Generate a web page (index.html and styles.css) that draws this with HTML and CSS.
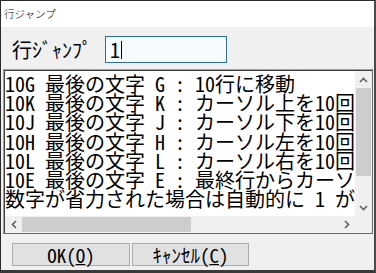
FILE: index.html
```html
<!DOCTYPE html>
<html lang="ja">
<head>
    <meta charset="UTF-8">
    <title>行ジャンプ</title>
    <link rel="stylesheet" href="styles.css">
</head>
<body>
    <div class="dialog">
        <div class="titlebar">行ジャンプ</div>

        <div class="content">
            <!-- jump target -->
            <div class="jump-row">
                <span class="jump-label">行ｼﾞｬﾝﾌﾟ</span>
                <div class="jump-input"><span>1</span><span class="caret"></span></div>
            </div>

            <!-- help list -->
            <div class="listbox">
                <div class="list-text">
                    <div class="line">10G 最後の文字 G : 10行に移動</div>
                    <div class="line">10K 最後の文字 K : カーソル上を10回移動</div>
                    <div class="line">10J 最後の文字 J : カーソル下を10回移動</div>
                    <div class="line">10H 最後の文字 H : カーソル左を10回移動</div>
                    <div class="line">10L 最後の文字 L : カーソル右を10回移動</div>
                    <div class="line">10E 最後の文字 E : 最終行からカーソル上へ移動</div>
                    <div class="line">数字が省力された場合は自動的に 1 が指定されます</div>
                </div>
                <div class="vscroll">
                    <div class="sb-arrow">
                        <svg width="9" height="6" viewBox="0 0 9 6"><polyline points="1,5 4.5,1.5 8,5" fill="none" stroke="#606060" stroke-width="1.6"/></svg>
                    </div>
                    <div class="vthumb"></div>
                    <div class="sb-track"></div>
                    <div class="sb-arrow">
                        <svg width="9" height="6" viewBox="0 0 9 6"><polyline points="1,1 4.5,4.5 8,1" fill="none" stroke="#606060" stroke-width="1.6"/></svg>
                    </div>
                </div>
                <div class="hscroll">
                    <div class="sb-arrow">
                        <svg width="6" height="9" viewBox="0 0 6 9"><polyline points="5,1 1.5,4.5 5,8" fill="none" stroke="#606060" stroke-width="1.6"/></svg>
                    </div>
                    <div class="hthumb"></div>
                    <div class="sb-track"></div>
                    <div class="sb-arrow">
                        <svg width="6" height="9" viewBox="0 0 6 9"><polyline points="1,1 4.5,4.5 1,8" fill="none" stroke="#606060" stroke-width="1.6"/></svg>
                    </div>
                </div>
                <div class="corner"></div>
            </div>

            <!-- buttons -->
            <div class="buttons">
                <button class="btn btn-ok">OK(<u>O</u>)</button>
                <button class="btn btn-cancel">ｷｬﾝｾﾙ(<u>C</u>)</button>
            </div>
        </div>
    </div>
</body>
</html>
```

FILE: styles.css
```css
/* Reset */
* {
    margin: 0;
    padding: 0;
    box-sizing: border-box;
}

body {
    background: #ffffff;
    font-family: "Noto Sans Mono CJK JP", "Noto Sans CJK JP", monospace;
    font-weight: 300;
    color: #000;
}

/* Dialog frame */
.dialog {
    width: 376px;
    height: 273px;
    border: 1px solid #2b2b2b;
    border-right: 2px solid #4a4a4a;
    border-bottom: 3px solid #3a3a3a;
    display: flex;
    flex-direction: column;
    background: #f0f0f0;
}

.titlebar {
    height: 26px;
    background: #fff;
    font-family: "Noto Sans CJK JP", sans-serif;
    font-size: 10.5px;
    line-height: 26px;
    padding-left: 3px;
}

.content {
    flex: 1;
    display: flex;
    flex-direction: column;
    padding: 9px 1px 0 2px;
}

/* Jump row */
.jump-row {
    display: flex;
    align-items: center;
    height: 27px;
    padding-left: 9px;
}

.jump-label {
    font-size: 20px;
    width: 93px;
}

.jump-input {
    width: 122px;
    height: 27px;
    border: 1px solid #2f6f9f;
    background: #f6fcfe;
    display: flex;
    align-items: center;
    padding-left: 4px;
    font-size: 20px;
}

.caret {
    display: inline-block;
    width: 1px;
    height: 18px;
    background: #000;
    margin-left: 1px;
}

/* List box */
.listbox {
    margin-top: 6px;
    width: 370px;
    height: 165px;
    border: 1px solid;
    border-color: #a0a0a0 #6a6a6a #6a6a6a #a0a0a0;
    box-shadow: inset 1px 1px #404040;
    display: grid;
    grid-template-columns: 1fr 17px;
    grid-template-rows: 1fr 17px;
    padding: 1px 0 0 1px;
    background: #fff;
}

.list-text {
    overflow: hidden;
    font-size: 20px;
    line-height: 19.2px;
    padding-top: 3px;
    background: #fff;
}

.line {
    white-space: pre;
}

.vscroll {
    display: flex;
    flex-direction: column;
    background: #f0f0f0;
}

.hscroll {
    display: flex;
    background: #f0f0f0;
}

.sb-arrow {
    width: 17px;
    height: 17px;
    display: flex;
    align-items: center;
    justify-content: center;
    flex: none;
}

.sb-track {
    flex: 1;
}

.vthumb {
    height: 88px;
    margin: 0 1px;
    background: #cdcdcd;
}

.hthumb {
    width: 169px;
    margin: 1px 0;
    background: #cdcdcd;
}

.corner {
    background: #f0f0f0;
}

/* Buttons */
.buttons {
    display: flex;
    gap: 2px;
    margin-top: 9px;
    padding-left: 9px;
}

.btn {
    height: 23px;
    background: #e1e1e1;
    border: 1px solid #adadad;
    font-family: "Noto Sans Mono CJK JP", "Noto Sans CJK JP", monospace;
    font-weight: 300;
    font-size: 19px;
    line-height: 20px;
    color: #000;
}

.btn-ok {
    width: 118px;
}

.btn-cancel {
    width: 117px;
}
```
